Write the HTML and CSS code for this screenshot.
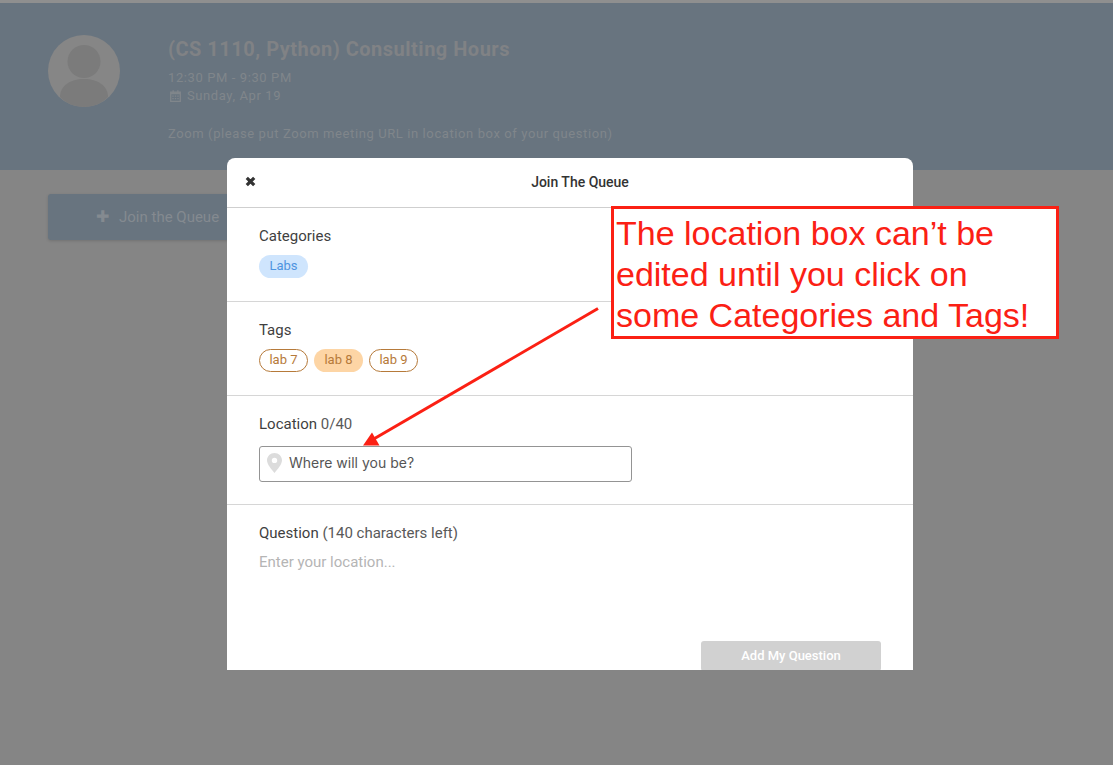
FILE: index.html
```html
<!DOCTYPE html>
<html lang="en">
<head>
<meta charset="utf-8">
<title>Join The Queue</title>
<link rel="stylesheet" href="styles.css">
</head>
<body>
<div class="page">
  <div class="topline"></div>
  <header class="banner">
    <svg class="avatar" viewBox="0 0 72 72" width="72" height="72">
      <circle cx="36" cy="36" r="36" fill="#868686"/>
      <circle cx="36" cy="26.500" r="16.500" fill="#7b7b7b"/>
      <path d="M12 62C12 51 22 44 36 44S60 51 60 62C54 68.500 45 72 36 72S18 68.500 12 62Z" fill="#7b7b7b"/>
    </svg>
    <div class="info">
      <h1 class="title">(CS 1110, Python) Consulting Hours</h1>
      <div class="meta">12:30 PM - 9:30 PM</div>
      <div class="meta date">
        <svg viewBox="0 0 11 12" width="11" height="12"><path d="M.7 2.200H10.300V11.300H.7Z" fill="none" stroke="#80868b" stroke-width="1.300"/><path d="M.7 2.200H10.300V4.300H.7ZM2.500 .3H3.800V2.500H2.500ZM7.200 .3H8.500V2.500H7.200Z" fill="#80868b"/><path d="M2.300 5.500H3.700V6.800H2.300ZM4.800 5.500H6.200V6.800H4.800ZM7.300 5.500H8.700V6.800H7.300ZM2.300 8H3.700V9.300H2.300ZM4.800 8H6.200V9.300H4.800ZM7.300 8H8.700V9.300H7.300Z" fill="#80868b"/></svg>
        <span>Sunday, Apr 19</span>
      </div>
      <div class="meta where">Zoom (please put Zoom meeting URL in location box of your question)</div>
    </div>
  </header>
  <div class="actions">
    <button class="join"><span class="plus">✚</span>Join the Queue</button>
  </div>

  <section class="modal">
    <div class="modal-head">
      <svg class="close" viewBox="0 0 11 11" width="11" height="11"><path d="M1.800 1.800L9.200 9.200M9.200 1.800L1.800 9.200" stroke="#333" stroke-width="3.200" fill="none"/></svg>
      <span class="modal-title">Join The Queue</span>
    </div>
    <div class="block block-chips">
      <div class="label">Categories</div>
      <div class="chips"><span class="chip chip-blue">Labs</span></div>
    </div>
    <div class="block block-chips">
      <div class="label">Tags</div>
      <div class="chips">
        <span class="chip chip-line">lab 7</span>
        <span class="chip chip-fill">lab 8</span>
        <span class="chip chip-line">lab 9</span>
      </div>
    </div>
    <div class="block block-loc">
      <div class="label">Location <span class="soft">0/40</span></div>
      <div class="field">
        <svg viewBox="0 0 15 20" width="15" height="20"><path fill-rule="evenodd" d="M7.500 0C3.400 0 0 3.200 0 7.300 0 11.500 4.500 16.500 7.500 20 10.500 16.500 15 11.500 15 7.300 15 3.200 11.600 0 7.500 0ZM7.500 4.700A2.700 2.700 0 1 1 7.500 10.100 2.700 2.700 0 1 1 7.500 4.700Z" fill="#dcdcdc"/></svg>
        <span class="field-text">Where will you be?</span>
      </div>
    </div>
    <div class="block block-q">
      <div class="label">Question <span class="soft">(140 characters left)</span></div>
      <div class="placeholder">Enter your location...</div>
      <div class="submit-row"><button class="submit">Add My Question</button></div>
    </div>
  </section>

  <aside class="note">The location box can’t be edited until you click on some Categories and Tags!</aside>
  <svg class="arrow" viewBox="0 0 1113 765" width="1113" height="765">
    <path d="M598 308.500L372 440" stroke="#fb2014" stroke-width="3" fill="none"/>
    <path d="M363 445.500L372 432.500 379.500 445.500Z" fill="#fb2014"/>
  </svg>
</div>
</body>
</html>
```
FILE: styles.css
```css
* { box-sizing: border-box; }
html, body { margin: 0; padding: 0; }
body { font-family: Roboto, "Liberation Sans", sans-serif; background: #858585; }
.page { position: relative; width: 1113px; height: 765px; overflow: hidden; background: #858585; }
.topline { height: 3px; background: #8f8f8f; }
.banner { height: 167px; background: #68747f; padding: 32px 48px 0; display: flex; gap: 48px; }
.avatar { flex: none; }
.info { padding-top: 2px; color: #80868b; }
.title { margin: 0 0 8px; font-size: 20px; line-height: 24px; font-weight: 700; letter-spacing: .5px; color: #808285; }
.meta { font-size: 13px; line-height: 18px; letter-spacing: .6px; }
.date { display: flex; align-items: center; gap: 6px; padding-left: 2px; }
.where { margin-top: 20px; }
.actions { padding: 24px 48px; }
.join { display: flex; align-items: center; justify-content: flex-start; gap: 10px; width: 250px; height: 46px; padding: 0 0 0 48px; border: 0; border-radius: 3px; background: #68747f; box-shadow: 0 1px 3px rgba(0,0,0,.15); color: #848a90; font: 400 15px Roboto, sans-serif; }
.plus { font-size: 16px; line-height: 16px; }
.modal { position: absolute; left: 227px; top: 158px; width: 686px; height: 512px; background: #fff; border-radius: 8px 8px 0 0; overflow: hidden; color: #3f3f3f; }
.modal-head { position: relative; height: 50px; padding-bottom: 2px; border-bottom: 1px solid #cfcfcf; display: flex; align-items: center; justify-content: center; }
.close { position: absolute; left: 18px; top: 18px; }
.modal-title { font-size: 14px; font-weight: 500; margin-left: 20px; color: #333; }
.block { padding: 18px 32px 0; border-bottom: 1px solid #d6d6d6; }
.block-chips { height: 94px; }
.block-loc { height: 109px; }
.block-q { border-bottom: 0; }
.label { font-size: 15px; line-height: 20px; color: #3f3f3f; }
.soft { color: #595959; }
.chips { display: flex; gap: 6px; margin-top: 9px; }
.chip { display: flex; align-items: center; justify-content: center; width: 49px; height: 23px; padding-bottom: 2px; border-radius: 12px; font-size: 13px; }
.chip-blue { background: #cfe5fd; color: #4e94e0; }
.chip-line { border: 1px solid #b67a3a; color: #b67a3a; background: #fff; }
.chip-fill { background: #fdd5a5; color: #b67a3a; }
.field { display: flex; align-items: center; gap: 7px; width: 373px; height: 36px; margin-top: 12px; padding: 0 7px 2px; border: 1px solid #949494; border-radius: 3px; font-family: Inter, "Liberation Sans", sans-serif; font-size: 14px; color: #555; }
.field svg { flex: none; }
.field-text { margin-bottom: 2px; }
.placeholder { margin-top: 9px; font-size: 15px; line-height: 20px; color: #b5b5b5; }
.submit-row { display: flex; justify-content: flex-end; margin-top: 69px; }
.submit { width: 180px; height: 30px; padding: 0 0 2px; border: 0; border-radius: 3px; background: #d1d1d1; color: #fff; font: 500 13px Roboto, sans-serif; }
.note { position: absolute; left: 611px; top: 206px; width: 448px; height: 133px; padding: 4px 2px 0; background: #fff; border: 3px solid #fb2014; color: #fb2014; font-family: "Liberation Sans", Arial, sans-serif; font-size: 34px; line-height: 41px; }
.arrow { position: absolute; left: 0; top: 0; pointer-events: none; }
```
